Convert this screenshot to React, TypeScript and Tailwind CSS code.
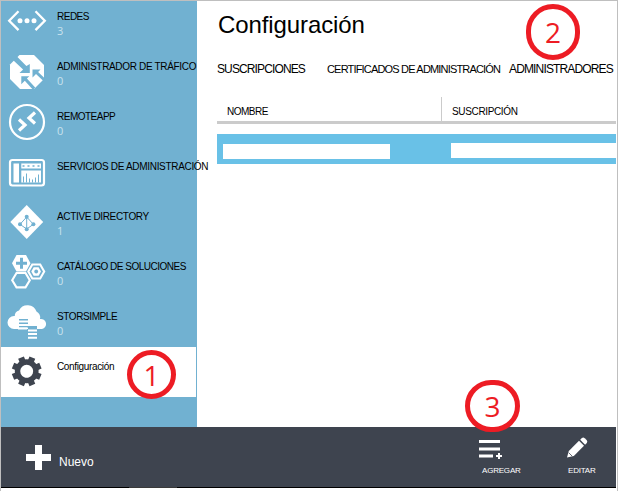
import type { ReactNode } from "react";

function Glyph({ children }: { children: ReactNode }) {
  return (
    <svg width="50" height="50" viewBox="1 0 50 50" fill="none" className="block">
      {children}
    </svg>
  );
}

function NetworkIcon() {
  return (
    <Glyph>
      <path d="M18.500 14.300 9.200 23.700l9.300 9.400M35.500 14.300l9.300 9.400-9.300 9.400" stroke="#fff" strokeWidth="2.300" />
      <g fill="#fff">
        <circle cx="20" cy="23.700" r="2.500" />
        <circle cx="27" cy="23.700" r="2.500" />
        <circle cx="34" cy="23.700" r="2.500" />
      </g>
    </Glyph>
  );
}

function TrafficIcon() {
  return (
    <Glyph>
      <path d="M19.500 8H34l10 10v14L34 42H20L10 32V17.500Z" fill="#fff" />
      <g fill="#71b1d1">
        <path d="M29.800 17v9H19.500l3.600-3.600L13 13l3.700-3.700 9.700 9.800Z" />
        <path d="M32.500 22.500h8l-2.400 2.400 6.900 6.500v4l-9-8.300-3.500 3.400Z" />
        <path d="M21.300 29.200h8l-2.400 2.400 8.300 8.900-2 2.500-8.400-9.300-3.500 3.500Z" />
      </g>
    </Glyph>
  );
}

function RemoteIcon() {
  return (
    <Glyph>
      <circle cx="27" cy="25" r="17" stroke="#fff" strokeWidth="2.200" />
      <path d="m19 22.500 6 5.500-6 5.500M35 15.500l-6 5.500 6 5.500" stroke="#fff" strokeWidth="3.200" />
    </Glyph>
  );
}

function ServicesIcon() {
  return (
    <Glyph>
      <rect x="10" y="13" width="34" height="25.500" rx="2.500" stroke="#fff" strokeWidth="2.200" />
      <path d="M13.500 16.500H19v19h-5.500zM21.300 16.500H41v5H21.300zM21.300 23.500H41v12H21.300z" fill="#fff" />
      <path d="M22.500 19h2m3 0h2m3 0h2m3 0h2" stroke="#71b1d1" strokeWidth="1.600" />
      <path d="M23.500 35.500v-6m3 6v-9m3 9v-4m3 4v-3m3 3v-5m3 5v-8" stroke="#71b1d1" />
    </Glyph>
  );
}

function DirectoryIcon() {
  return (
    <Glyph>
      <path d="m26.700 8 16.500 17-16.500 17L10.300 25Z" fill="#fff" />
      <path d="m26.700 20-6.700 7.300 6.700 4.700 6.700-4.700Zm0 0v12" stroke="#71b1d1" />
      <g fill="#71b1d1">
        <circle cx="26.700" cy="19.700" r="2" />
        <circle cx="20" cy="27.300" r="2" />
        <circle cx="33.400" cy="27.300" r="2" />
        <circle cx="26.700" cy="32.300" r="2" />
      </g>
    </Glyph>
  );
}

function CatalogIcon() {
  return (
    <Glyph>
      <path d="M16.500 8h9.500l4.500 8.300-4.500 8.300h-9.500L12 16.300Z" fill="#fff" />
      <path d="M21.500 10.800v11M16 16.300h11" stroke="#71b1d1" strokeWidth="3" />
      <g stroke="#fff" strokeWidth="2.100">
        <path d="M16.500 26h9l4.300 7.200-4.300 7.200h-9l-4.300-7.200Z" />
        <path d="M32.300 17.500h7.900l4 7-4 7h-7.900l-4-7Z" />
      </g>
      <path d="M33.700 20.300h4.900l2.400 4.200-2.400 4.200h-4.900l-2.400-4.200Z" fill="#fff" />
      <circle cx="36.200" cy="24.500" r="1.900" fill="#71b1d1" />
    </Glyph>
  );
}

function CloudIcon() {
  return (
    <Glyph>
      <path
        d="M14 32a6.500 6.500 0 0 1 0-13q.4 0 .8.050A5 5 0 0 1 19 13.500a9.500 9.500 0 0 1 17.500 1q4.500 2.500 3.500 7.500a5 5 0 1 1 2 10Z"
        fill="#fff"
      />
      <path d="M19 22.700h9M19 26.200h9M19 29.800h18" stroke="#71b1d1" strokeWidth="1.600" />
      <path d="M28 29h9v3h-9z" fill="#71b1d1" />
      <path d="M18 31.500h9m1 2h9m-9 3.600h9m-9 3.600h9" stroke="#fff" strokeWidth="2" />
    </Glyph>
  );
}

function GearIcon() {
  return (
    <Glyph>
      <g stroke="#3e444f" transform="rotate(22.500 26.700 24.300)">
        <circle cx="26.700" cy="24.300" r="9.200" strokeWidth="5.400" />
        <path
          d="M26.700 9.500v5m0 19.600v5M11.900 24.300h5m19.600 0h5M16.200 13.800l3.500 3.500m14 14 3.500 3.500M16.200 34.800l3.500-3.500m14-14 3.500-3.500"
          strokeWidth="6.200"
        />
      </g>
    </Glyph>
  );
}

type NavItem = { label: string; count?: string; icon: ReactNode; tracking: string };

const items: NavItem[] = [
  { label: "REDES", count: "3", icon: <NetworkIcon />, tracking: "tracking-[-0.5px]" },
  { label: "ADMINISTRADOR DE TRÁFICO", count: "0", icon: <TrafficIcon />, tracking: "tracking-[-0.33px]" },
  { label: "REMOTEAPP", count: "0", icon: <RemoteIcon />, tracking: "tracking-[-0.5px]" },
  { label: "SERVICIOS DE ADMINISTRACIÓN", icon: <ServicesIcon />, tracking: "tracking-[-0.32px]" },
  { label: "ACTIVE DIRECTORY", count: "1", icon: <DirectoryIcon />, tracking: "tracking-[-0.35px]" },
  { label: "CATÁLOGO DE SOLUCIONES", count: "0", icon: <CatalogIcon />, tracking: "tracking-[-0.5px]" },
  { label: "STORSIMPLE", count: "0", icon: <CloudIcon />, tracking: "tracking-[-0.4px]" },
];

function Marker({ n, className }: { n: string; className: string }) {
  return (
    <div
      className={`absolute flex items-center justify-center rounded-full border-[5px] border-[#ed1c24] font-['Open_Sans','Noto_Sans',sans-serif] text-[28px] leading-none text-[#ed1c24] ${className}`}
    >
      {n}
    </div>
  );
}

export default function App() {
  return (
    <div className="relative flex h-[491px] w-[618px] flex-col overflow-hidden border-x border-t border-[#bfbfbf] bg-white font-['Liberation_Sans',Arial,sans-serif] text-black">
      <div className="flex h-[426px] shrink-0">
        <nav className="h-full w-[196px] shrink-0 bg-[#71b1d1]">
          <ul className="-mt-1">
            {items.map((it) => (
              <li key={it.label} className="flex h-[50px]">
                <span className="w-14 shrink-0">{it.icon}</span>
                <span className="flex flex-col pt-[14px] whitespace-nowrap">
                  <span className={`text-[10px] leading-[12px] ${it.tracking}`}>{it.label}</span>
                  <span className="pt-px font-['Open_Sans',sans-serif] text-[11px] leading-[13px] text-[#c9e2ee]">
                    {it.count}
                  </span>
                </span>
              </li>
            ))}
            <li className="flex h-[50px] w-[195px] bg-white">
              <span className="w-14 shrink-0">
                <GearIcon />
              </span>
              <span className="pt-[14px] text-[10px] leading-[12px] tracking-[-0.35px]">Configuración</span>
            </li>
          </ul>
        </nav>
        <main className="min-w-0 flex-1 pl-5">
          <h1 className="h-[60px] pt-[10px] pl-px text-[24px] leading-[28px] tracking-[-0.1px]">Configuración</h1>
          <div className="flex h-[36px] text-[12px] leading-[16px] whitespace-nowrap">
            <span className="w-[110px] tracking-[-0.88px]">SUSCRIPCIONES</span>
            <span className="w-[182px] text-[11px] tracking-[-0.82px]">CERTIFICADOS DE ADMINISTRACIÓN</span>
            <span className="tracking-[-0.85px]">ADMINISTRADORES</span>
          </div>
          <div className="mr-px flex h-[27px] border-b-[3px] border-[#cbcbcb] text-[10px] leading-[12px]">
            <span className="w-[224px] pt-[9px] pl-[10px] tracking-[-0.5px]">NOMBRE</span>
            <span className="flex-1 border-l border-[#cbcbcb] pt-[9px] pl-[10px] tracking-[-0.35px]">SUSCRIPCIÓN</span>
          </div>
          <div className="mt-[10px] mr-px flex h-[30px] bg-[#69c1e7]">
            <span className="mt-[10px] ml-[6px] h-[15px] w-[167px] bg-white" />
            <span className="mt-[9px] ml-[61px] h-[15px] flex-1 bg-white" />
          </div>
        </main>
      </div>
      <footer className="mr-px flex h-[60px] shrink-0 bg-[#3e444f] text-white">
        <svg className="mt-[18px] ml-[25px] shrink-0" width="25" height="25">
          <path d="M9 0h7v9h9v7h-9v9H9v-9H0V9h9Z" fill="#fff" />
        </svg>
        <span className="mt-[27px] ml-2 flex-1 text-[12px] leading-4">Nuevo</span>
        <div className="w-[86px] pt-[13px] text-[8px] leading-[10px] tracking-[-0.2px]">
          <svg width="25" height="20" className="-ml-1 block">
            <path d="M1 1.500h21M1 9h21M1 16h14" stroke="#fff" strokeWidth="3" />
            <path d="M21 13v6m-3-3h6" stroke="#fff" strokeWidth="2" />
          </svg>
          <span className="block pt-[6px]">AGREGAR</span>
        </div>
        <div className="w-[48px] pt-[10px] text-[8px] leading-[10px] tracking-[-0.2px]">
          <svg width="21" height="21" viewBox="0 0 21 21" className="-ml-px block">
            <path d="M0 20.500 1.800 14 12 3.800l5 5L6.800 19Z" fill="#fff" />
            <path d="m13.200 2.700 1.700-1.700q1.400-1 2.800.2l1.900 1.900q1.300 1.400.2 2.900l-1.700 1.700Z" fill="#fff" />
            <path d="m1.700 15.700 3.500 3.500" stroke="#3e444f" strokeWidth=".8" />
          </svg>
          <span className="block pt-2">EDITAR</span>
        </div>
      </footer>
      <div className="mr-px flex h-px shrink-0 bg-black">
        <span className="ml-32 w-12 bg-[#3a3a3a]" />
      </div>
      <Marker n="1" className="top-[349px] left-[126px] size-[49px]" />
      <Marker n="2" className="top-[3px] left-[525px] h-[56px] w-[54px]" />
      <Marker n="3" className="top-[379px] left-[464px] h-[52px] w-[55px]" />
    </div>
  );
}
